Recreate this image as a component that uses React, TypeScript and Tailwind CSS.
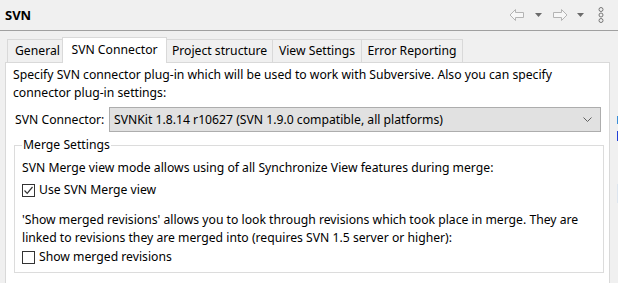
import React from "react";

function LeftArrow() {
  return (
    <svg width="16" height="12" viewBox="0 0 16 12">
      <path d="M1 6 L6.5 0.5 L6.5 3.5 L14.5 3.5 L14.5 8.5 L6.5 8.5 L6.5 11.5 Z" fill="#f7f7f7" stroke="#b4b4b4" strokeWidth="1" />
    </svg>
  );
}
function RightArrow() {
  return (
    <svg width="16" height="12" viewBox="0 0 16 12">
      <path d="M15 6 L9.5 0.5 L9.5 3.5 L1.5 3.5 L1.5 8.5 L9.5 8.5 L9.5 11.5 Z" fill="#f7f7f7" stroke="#b4b4b4" strokeWidth="1" />
    </svg>
  );
}
function Tri() {
  return (
    <svg width="7" height="4" viewBox="0 0 7 4">
      <path d="M0 0 L7 0 L3.5 4 Z" fill="#6b6b6b" />
    </svg>
  );
}
function Kebab() {
  return (
    <svg width="6" height="16" viewBox="0 0 6 16">
      <circle cx="3" cy="2.5" r="2" fill="none" stroke="#777" strokeWidth="1" />
      <circle cx="3" cy="8" r="2" fill="none" stroke="#777" strokeWidth="1" />
      <circle cx="3" cy="13.5" r="2" fill="none" stroke="#777" strokeWidth="1" />
    </svg>
  );
}

function Checkbox({ checked }: { checked: boolean }) {
  return (
    <div className="w-[13px] h-[13px] border border-[#333333] bg-white flex items-center justify-center shrink-0">
      {checked && (
        <svg width="11" height="11" viewBox="0 0 11 11">
          <path d="M1.5 5.5 L4.2 8.3 L9.5 2" fill="none" stroke="#333" strokeWidth="1.2" />
        </svg>
      )}
    </div>
  );
}

export default function App() {
  return (
    <div className="w-[618px] h-[283px] overflow-hidden bg-[#f0f0f0] text-[12.2px] text-black font-['Noto_Sans',sans-serif]">
      <div className="h-[31px] border-b border-[#a0a0a0] flex items-center pl-[5px] pr-[14px]">
        <span className="font-bold text-[13px] leading-none">SVN</span>
        <div className="ml-auto flex items-center">
          <LeftArrow />
          <div className="ml-[10px]"><Tri /></div>
          <div className="ml-[10px]"><RightArrow /></div>
          <div className="ml-[9px]"><Tri /></div>
          <div className="ml-[14px]"><Kebab /></div>
        </div>
      </div>
      <div className="flex">
        <div className="w-[610px] pl-[5px]">
          <div className="h-[31px] flex items-end pl-[2px]">
            <div className="w-[55px] h-[23px] border-l border-t border-[#d9d9d9] flex items-center pl-[7px] leading-none">General</div>
            <div className="relative z-10 w-[105px] h-[26px] -mb-px bg-white border-l border-t border-r border-[#d9d9d9] flex items-center justify-center leading-none pb-[1px]">SVN Connector</div>
            <div className="w-[106px] h-[23px] border-t border-r border-[#d9d9d9] flex items-center justify-center leading-none">Project structure</div>
            <div className="w-[89px] h-[23px] border-t border-r border-[#d9d9d9] flex items-center justify-center leading-none">View Settings</div>
            <div className="w-[101px] h-[23px] border-t border-r border-[#d9d9d9] flex items-center justify-center leading-none">Error Reporting</div>
          </div>
          <div className="w-[605px] h-[240px] bg-white border border-[#d9d9d9] pt-[3px] pl-[7px] leading-[18px]">
            <div className="whitespace-nowrap">Specify SVN connector plug-in which will be used to work with Subversive. Also you can specify</div>
            <div className="whitespace-nowrap">connector plug-in settings:</div>
            <div className="mt-[5px] flex items-center">
              <span className="w-[96px] pl-[2px]">SVN Connector:</span>
              <div className="w-[492px] h-[25px] bg-[#e1e1e1] border border-[#adadad] flex items-center pl-[4px] pr-[8px]">
                <span className="whitespace-nowrap">SVNKit 1.8.14 r10627 (SVN 1.9.0 compatible, all platforms)</span>
                <svg className="ml-auto" width="9" height="5" viewBox="0 0 9 5">
                  <path d="M0.5 0.5 L4.5 4.5 L8.5 0.5" fill="none" stroke="#606060" strokeWidth="1" />
                </svg>
              </div>
            </div>
            <fieldset className="mt-[4px] ml-[1px] w-[590px] border border-[#dcdcdc] px-[7px] pb-[6px]">
              <legend className="px-[1px] leading-[18px]">Merge Settings</legend>
              <div className="mt-[5px] whitespace-nowrap">SVN Merge view mode allows using of all Synchronize View features during merge:</div>
              <div className="mt-[4px] flex items-center gap-[4px]">
                <Checkbox checked />
                <span>Use SVN Merge view</span>
              </div>
              <div className="mt-[12px] whitespace-nowrap">'Show merged revisions' allows you to look through revisions which took place in merge. They are</div>
              <div className="whitespace-nowrap">linked to revisions they are merged into (requires SVN 1.5 server or higher):</div>
              <div className="mt-[1px] flex items-center gap-[4px]">
                <Checkbox checked={false} />
                <span>Show merged revisions</span>
              </div>
            </fieldset>
          </div>
        </div>
        <div className="w-[8px] flex flex-col items-end">
          <div className="w-[1px] h-[8px] mt-[85px] bg-[#3c8fd8]" />
          <div className="w-[1px] h-[10px] mt-[7px] bg-[#2340d8]" />
          <div className="w-[1px] h-[19px] mt-[43px] bg-[#dde5ee]" />
        </div>
      </div>
    </div>
  );
}
